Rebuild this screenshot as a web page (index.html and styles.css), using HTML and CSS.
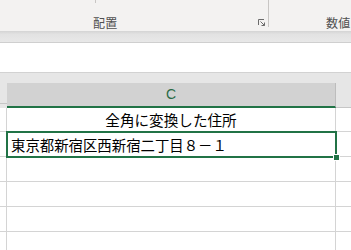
FILE: index.html
```html
<!DOCTYPE html>
<html lang="ja">
<head>
  <meta charset="utf-8">
  <link rel="stylesheet" href="styles.css">
</head>
<body>
  <div class="ribbon">
    <div class="group group-align">
      <span class="stub"></span>
      <span class="group-label">配置</span>
      <svg class="launcher" viewBox="0 0 8 8" fill="none" stroke="#6b6b6b" stroke-width="1">
        <path d="M0.5 6V0.5H6"/>
        <path d="M2.5 2.5L6.5 6.5M3.5 6.5H6.5V3.5"/>
      </svg>
    </div>
    <div class="sep"></div>
    <div class="group group-number">
      <span class="group-label">数値</span>
    </div>
  </div>
  <div class="ribbon-shadow"></div>

  <div class="formula-bar"></div>

  <div class="col-headers">
    <div class="corner"></div>
    <div class="col-head active">C</div>
    <div class="col-rest"></div>
  </div>

  <div class="sheet">
    <div class="row">
      <div class="row-head"></div>
      <div class="cell center">全角に変換した住所</div>
      <div class="rest"></div>
    </div>
    <div class="row">
      <div class="row-head"></div>
      <div class="cell selected">東京都新宿区西新宿二丁目８－１<span class="handle"></span></div>
      <div class="rest"></div>
    </div>
    <div class="row">
      <div class="row-head"></div>
      <div class="cell"></div>
      <div class="rest"></div>
    </div>
    <div class="row">
      <div class="row-head"></div>
      <div class="cell"></div>
      <div class="rest"></div>
    </div>
    <div class="row">
      <div class="row-head"></div>
      <div class="cell"></div>
      <div class="rest"></div>
    </div>
    <div class="row">
      <div class="row-head"></div>
      <div class="cell"></div>
      <div class="rest"></div>
    </div>
  </div>
</body>
</html>
```

FILE: styles.css
```css
* {
  margin: 0;
  padding: 0;
  box-sizing: border-box;
}

body {
  width: 351px;
  height: 250px;
  overflow: hidden;
  background: #ffffff;
  font-family: "Noto Sans CJK JP", "Noto Sans", sans-serif;
  color: #000;
}

/* ribbon */
.ribbon {
  display: flex;
  height: 31px;
  background: #f3f2f1;
}

.group {
  position: relative;
  display: flex;
  align-items: flex-start;
  height: 31px;
  padding-top: 16px;
}

.group-align {
  width: 268px;
  padding-left: 93px;
}

.sep {
  width: 1px;
  height: 27px;
  background: #c8c6c4;
}

.group-number {
  padding-left: 57px;
}

.group-label {
  font-size: 12px;
  line-height: 14px;
  color: #505050;
  letter-spacing: 0.3px;
}

.stub {
  position: absolute;
  left: 95px;
  top: 0;
  width: 1px;
  height: 3px;
  background: #c8c6c4;
}

.launcher {
  position: absolute;
  left: 258px;
  top: 19px;
  width: 8px;
  height: 8px;
}

.ribbon-shadow {
  height: 12px;
  background: linear-gradient(#d4d4d4, #e2e2e2 30%, #e8e8e8);
  border-bottom: 1px solid #cfcfcf;
}

/* formula bar area */
.formula-bar {
  height: 30px;
  border-bottom: 1px solid #d2d2d2;
}

/* column headers */
.col-headers {
  display: flex;
  height: 35px;
  background: #e6e6e6;
  padding-top: 10px;
}

.corner {
  width: 7px;
  border-bottom: 1px solid #c6c6c6;
  margin-bottom: 4px;
}

.col-head {
  width: 329px;
  background: #d2d2d2;
  border-right: 1px solid #bdbdbd;
  border-bottom: 2px solid #217346;
  text-align: center;
  font-family: "Liberation Sans", sans-serif;
  font-size: 14px;
  line-height: 23px;
  color: #2a6a45;
}

.col-rest {
  flex: 1;
  border-bottom: 1px solid #c6c6c6;
}

/* grid */
.row {
  display: flex;
  height: 25px;
  border-bottom: 1px solid #d4d4d4;
}

.row:first-child {
  height: 24px;
}

.row-head {
  width: 7px;
  border-right: 1px solid #d4d4d4;
}

.cell {
  position: relative;
  width: 329px;
  border-right: 1px solid #d4d4d4;
  font-size: 14.6px;
  line-height: 24px;
  white-space: nowrap;
}

.center {
  text-align: center;
}

.rest {
  flex: 1;
}

.selected {
  margin: -1px 0 -1px -1px;
  width: 331px;
  height: 27px;
  border: 2px solid #217346;
  padding-left: 3px;
  line-height: 23px;
  font-size: 14.4px;
  z-index: 1;
}

.handle {
  position: absolute;
  right: -5px;
  bottom: -5px;
  width: 7px;
  height: 7px;
  background: #217346;
  border: 1px solid #ffffff;
}
```
